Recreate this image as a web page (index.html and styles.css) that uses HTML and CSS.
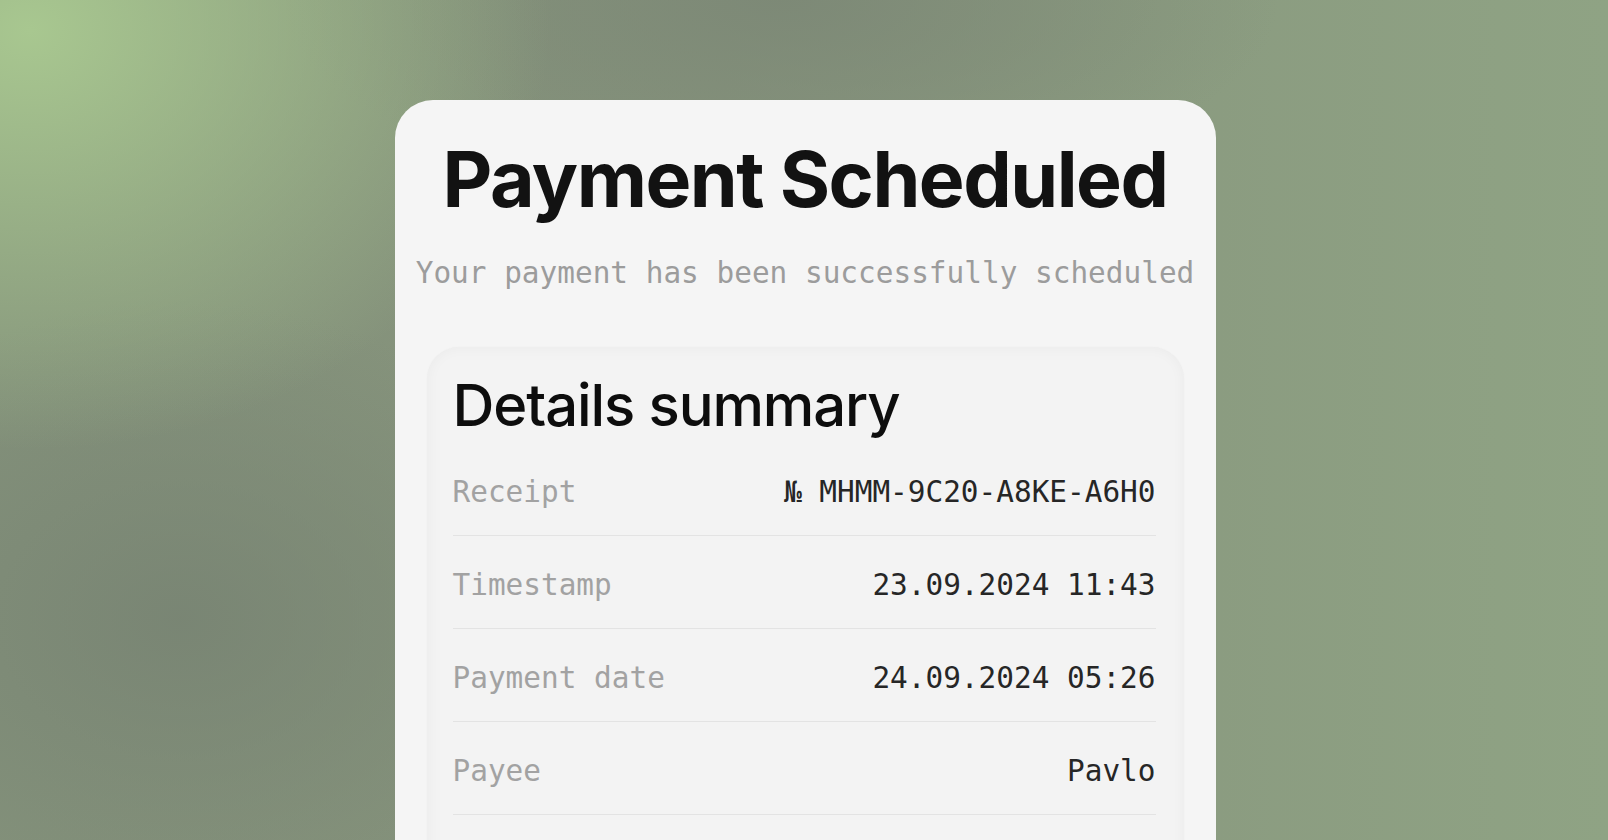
FILE: index.html
```html
<!DOCTYPE html>
<html lang="en">
<head>
    <meta charset="UTF-8">
    <meta name="viewport" content="width=device-width, initial-scale=1.0">
    <title>Payment Scheduled</title>
    <link rel="stylesheet" href="styles.css">
</head>
<body>
    <main class="page">
        <section class="card">
            <h1 class="title">Payment Scheduled</h1>
            <p class="subtitle">Your payment has been successfully scheduled</p>

            <div class="summary">
                <h2 class="summary-title">Details summary</h2>
                <div class="row">
                    <span class="label">Receipt</span>
                    <span class="value">№ MHMM-9C20-A8KE-A6H0</span>
                </div>
                <div class="row">
                    <span class="label">Timestamp</span>
                    <span class="value">23.09.2024 11:43</span>
                </div>
                <div class="row">
                    <span class="label">Payment date</span>
                    <span class="value">24.09.2024 05:26</span>
                </div>
                <div class="row">
                    <span class="label">Payee</span>
                    <span class="value">Pavlo</span>
                </div>
            </div>
        </section>
    </main>
</body>
</html>
```

FILE: styles.css
```css
* {
    margin: 0;
    padding: 0;
    box-sizing: border-box;
}

html, body {
    height: 100%;
}

body {
    overflow: hidden;
    font-family: 'Inter', 'Noto Sans', sans-serif;
    background-color: #85927b;
    background-image:
        radial-gradient(ellipse 520px 420px at 30px 30px, rgba(170, 202, 145, 0.95), rgba(170, 202, 145, 0) 100%),
        radial-gradient(ellipse 420px 320px at 180px 620px, rgba(120, 132, 115, 0.9), rgba(120, 132, 115, 0) 100%),
        radial-gradient(ellipse 500px 200px at 780px 0px, rgba(124, 136, 118, 0.9), rgba(124, 136, 118, 0) 100%),
        linear-gradient(90deg, #84927b 0%, #86937c 45%, #8fa384 100%);
}

.page {
    display: flex;
    justify-content: center;
    padding-top: 100px;
    padding-left: 2px;
}

.card {
    width: 821px;
    min-height: 900px;
    background-color: #f5f5f5;
    border-radius: 38px 38px 0 0;
    padding-top: 41px;
}

.title {
    font-size: 77px;
    line-height: 77px;
    font-weight: 700;
    letter-spacing: -1.5px;
    color: #121212;
    text-align: center;
}

.subtitle {
    margin-top: 37px;
    font-family: 'DejaVu Sans Mono', monospace;
    font-size: 29.4px;
    line-height: 36px;
    color: #9c9c9c;
    text-align: center;
    white-space: nowrap;
}

.summary {
    margin: 56px 32px 0 32px;
    padding: 29px 28px 0 26px;
    min-height: 600px;
    background-color: #f3f3f3;
    border-radius: 32px 32px 0 0;
    box-shadow: inset 0 0 14px rgba(0, 0, 0, 0.04), 0 0 2px rgba(0, 0, 0, 0.03);
}

.summary-title {
    font-size: 58px;
    line-height: 58px;
    font-weight: 500;
    letter-spacing: -1.1px;
    color: #0d0d0d;
    margin-bottom: 9px;
}

.row {
    display: flex;
    justify-content: space-between;
    padding: 31px 0 25px 0;
    border-bottom: 1px solid #e3e3e3;
    font-family: 'DejaVu Sans Mono', monospace;
    font-size: 29.4px;
    line-height: 36px;
}

.label {
    color: #a2a2a2;
}

.value {
    color: #262626;
}
```
